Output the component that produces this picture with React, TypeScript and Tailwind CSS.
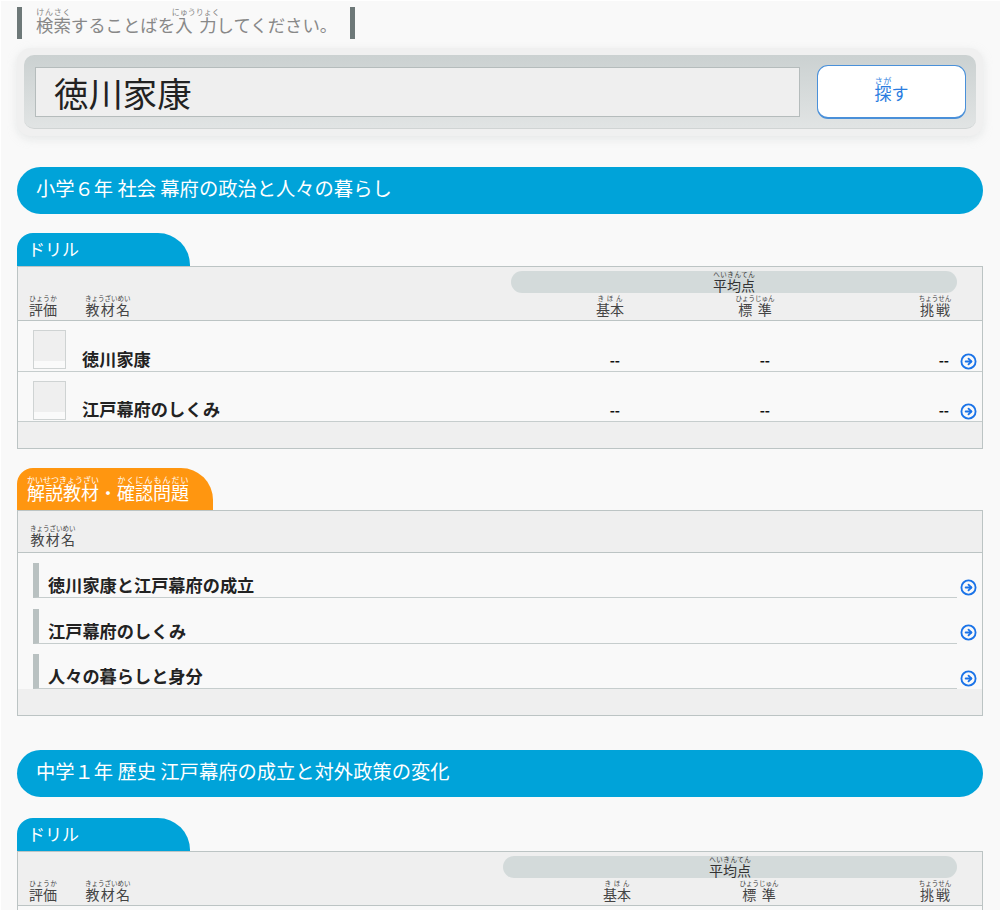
import React from 'react';
import { CircleArrowRight } from 'lucide-react';

// rt size follows the base text, roughly half of it
const Rb = ({ base, ruby, small }: { base: string; ruby: string; small?: boolean }) => (
  <ruby className={small ? 'leading-[13px]' : 'leading-[15px]'}>
    {base}
    <rt className={`${small ? 'text-[6.5px]' : 'text-[8px]'} leading-[6px] font-normal`}>{ruby}</rt>
  </ruby>
);

const Arrow = () => <CircleArrowRight className="h-[17px] w-[17px] text-[#1a73e8]" strokeWidth={2.6} />;

const DrillHeader = ({ pillLeft, cols }: { pillLeft: string; cols: string[] }) => (
  <div className="h-[54px] bg-[#efefef] border-b border-[#bcc4c4] flex flex-col text-[#444]">
    <div className={`mt-1 h-[22px] rounded-full bg-[#d3dada] mr-[25px] text-center text-[14px] leading-[24px] text-[#333] ${pillLeft}`}>
      <Rb small base="平均点" ruby="へいきんてん" />
    </div>
    <div className="flex items-end h-[26px] text-[14px] leading-[20px]">
      <span className="w-[67px] pl-[11px]"><Rb small base="評価" ruby="ひょうか" /></span>
      <span className="w-[495px]"><Rb small base="教材名" ruby="きょうざいめい" /></span>
      <span className={`w-[60px] text-center ${cols[0]}`}><Rb small base="基本" ruby="きほん" /></span>
      <span className={`w-[60px] text-center ${cols[1]}`}><Rb small base="標準" ruby="ひょうじゅん" /></span>
      <span className={`w-[60px] text-center ${cols[2]}`}><Rb small base="挑戦" ruby="ちょうせん" /></span>
    </div>
  </div>
);

const DrillRow = ({ name }: { name: string }) => (
  <div className="h-[50.5px] border-b border-[#c6cdcd] flex items-end pl-[15px] text-[#222]">
    <div className="h-[39px] w-[33px] mb-[1.5px] border border-[#cfd3d3] bg-[#fafafa] shrink-0">
      <div className="h-[30px] bg-[#efefef]" />
    </div>
    <div className="w-[440px] pl-[16px] text-[17.2px] leading-[24px] font-bold">{name}</div>
    <div className="w-[114px] text-right text-[14px] leading-[22px] font-bold text-[#111]">--</div>
    <div className="w-[150px] text-right text-[14px] leading-[22px] font-bold text-[#111]">--</div>
    <div className="w-[179px] text-right text-[14px] leading-[22px] font-bold text-[#111]">--</div>
    <div className="ml-[11px] mb-[1px]"><Arrow /></div>
  </div>
);

const Lesson = ({ name }: { name: string }) => (
  <div className="h-[45.4px] flex items-end pl-[15px]">
    <div className="h-[35px] w-[924px] border-l-[6px] border-b border-[#b9c1c1] border-b-[#c6cdcd] pl-[9px] text-[17.2px] leading-[24px] font-bold text-[#222]">
      <div className="pt-[10px]">{name}</div>
    </div>
    <div className="ml-[3px] mb-[2.5px]"><Arrow /></div>
  </div>
);

const BlueTitle = ({ children }: { children: React.ReactNode }) => (
  <h2 className="h-[47px] rounded-[24px] bg-[#00a3d9] pl-[19px] text-[19.3px] leading-[43px] text-white">{children}</h2>
);

const DrillTab = () => (
  <div className="h-[33px] w-[173px] rounded-tl-[16px] rounded-tr-[32px] bg-[#00a3d9] pl-[11px] text-[17px] leading-[31px] text-white">ドリル</div>
);

export default function App() {
  return (
    <div className="h-[910px] overflow-hidden border-l border-t border-white bg-[#f9f9f9] pl-[16px] pr-[17px] pt-[6px] font-['Noto_Sans_CJK_JP',sans-serif]">
      <div className="flex h-[32px] w-[338px] border-x-[5px] border-[#6d7878] pl-[14px] text-[17.4px] leading-[36px] text-[#888] whitespace-nowrap">
        <span><Rb base="検索" ruby="けんさく" />することばを<Rb base="入力" ruby="にゅうりょく" />してください。</span>
      </div>

      <div className="mt-[9px] rounded-[14px] bg-[#f0f0f0] p-[7px] shadow-[0_3px_10px_rgba(200,205,205,0.4)]">
        <div className="flex h-[74px] items-center rounded-[10px] bg-gradient-to-b from-[#cbd1d1] to-[#e1e4e4] pl-[11px] border-b border-[#d0d4d4]">
          <div className="h-[50px] w-[765px] border border-[#b5bcbc] bg-[#efefef] pl-[18px] text-[34.4px] leading-[48px] text-[#222]">徳川家康</div>
          <button className="ml-[17px] h-[54px] w-[149px] rounded-[11px] border border-[#4a90d9] border-b-2 bg-white text-[17px] leading-[22px] text-[#2b7de0]">
            <span className="relative top-[-1px]"><Rb base="探" ruby="さが" />す</span>
          </button>
        </div>
      </div>

      <div className="mt-[31px]"><BlueTitle>小学６年 社会 幕府の政治と人々の暮らし</BlueTitle></div>

      <div className="mt-[19px]"><DrillTab /></div>
      <div className="border border-[#bcc4c4]">
        <DrillHeader pillLeft="ml-[493px]" cols={['', 'ml-[85px]', 'ml-[120px]']} />
        <DrillRow name="徳川家康" />
        <DrillRow name="江戸幕府のしくみ" />
        <div className="h-[26px] bg-[#efefef]" />
      </div>

      <div className="mt-[19px] h-[42px] w-[196px] rounded-tl-[16px] rounded-tr-[32px] bg-[#ff9610] pl-[10px] pt-[6px] text-[18px] leading-[36px] text-white whitespace-nowrap">
        <Rb base="解説教材" ruby="かいせつきょうざい" />・<Rb base="確認問題" ruby="かくにんもんだい" />
      </div>
      <div className="border border-[#bcc4c4]">
        <div className="h-[42px] border-b border-[#bcc4c4] bg-[#efefef] pl-[12px] pt-[16px] text-[14px] leading-[24px] text-[#444]">
          <Rb small base="教材名" ruby="きょうざいめい" />
        </div>
        <div>
          <Lesson name="徳川家康と江戸幕府の成立" />
          <Lesson name="江戸幕府のしくみ" />
          <Lesson name="人々の暮らしと身分" />
        </div>
        <div className="h-[26px] bg-[#efefef]" />
      </div>

      <div className="mt-[34px]"><BlueTitle>中学１年 歴史 江戸幕府の成立と対外政策の変化</BlueTitle></div>

      <div className="mt-[21px]"><DrillTab /></div>
      <div className="border border-[#bcc4c4]">
        <DrillHeader pillLeft="ml-[485px]" cols={['ml-[7px]', 'ml-[82px]', 'ml-[116px]']} />
        <div className="h-[50px]" />
      </div>
    </div>
  );
}
